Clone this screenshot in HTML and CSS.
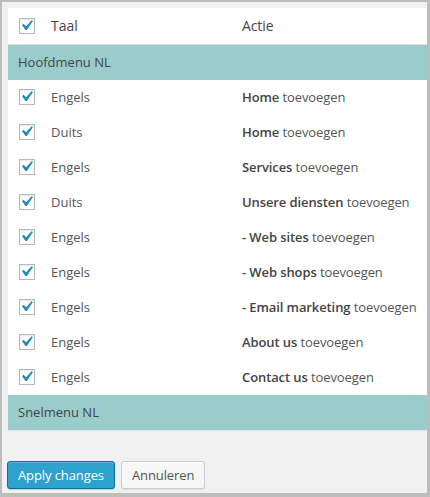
FILE: index.html
```html
<!DOCTYPE html>
<html lang="nl">
<head>
<meta charset="utf-8">
<link rel="stylesheet" href="styles.css">
</head>
<body>
<div class="frame">
  <div class="table">
    <div class="row head">
      <span class="cb"><svg viewBox="0 0 20 20"><path d="M14.83 4.89l1.34.94-5.81 8.38H9.02L5.78 9.67l1.34-1.25 2.57 2.4z"/></svg></span>
      <span class="lang">Taal</span>
      <span class="action">Actie</span>
    </div>
    <div class="band">Hoofdmenu NL</div>
    <div class="row">
      <span class="cb"><svg viewBox="0 0 20 20"><path d="M14.83 4.89l1.34.94-5.81 8.38H9.02L5.78 9.67l1.34-1.25 2.57 2.4z"/></svg></span>
      <span class="lang">Engels</span>
      <span class="action"><b>Home</b> toevoegen</span>
    </div>
    <div class="row">
      <span class="cb"><svg viewBox="0 0 20 20"><path d="M14.83 4.89l1.34.94-5.81 8.38H9.02L5.78 9.67l1.34-1.25 2.57 2.4z"/></svg></span>
      <span class="lang">Duits</span>
      <span class="action"><b>Home</b> toevoegen</span>
    </div>
    <div class="row">
      <span class="cb"><svg viewBox="0 0 20 20"><path d="M14.83 4.89l1.34.94-5.81 8.38H9.02L5.78 9.67l1.34-1.25 2.57 2.4z"/></svg></span>
      <span class="lang">Engels</span>
      <span class="action"><b>Services</b> toevoegen</span>
    </div>
    <div class="row">
      <span class="cb"><svg viewBox="0 0 20 20"><path d="M14.83 4.89l1.34.94-5.81 8.38H9.02L5.78 9.67l1.34-1.25 2.57 2.4z"/></svg></span>
      <span class="lang">Duits</span>
      <span class="action"><b>Unsere diensten</b> toevoegen</span>
    </div>
    <div class="row">
      <span class="cb"><svg viewBox="0 0 20 20"><path d="M14.83 4.89l1.34.94-5.81 8.38H9.02L5.78 9.67l1.34-1.25 2.57 2.4z"/></svg></span>
      <span class="lang">Engels</span>
      <span class="action"><b>- Web sites</b> toevoegen</span>
    </div>
    <div class="row">
      <span class="cb"><svg viewBox="0 0 20 20"><path d="M14.83 4.89l1.34.94-5.81 8.38H9.02L5.78 9.67l1.34-1.25 2.57 2.4z"/></svg></span>
      <span class="lang">Engels</span>
      <span class="action"><b>- Web shops</b> toevoegen</span>
    </div>
    <div class="row">
      <span class="cb"><svg viewBox="0 0 20 20"><path d="M14.83 4.89l1.34.94-5.81 8.38H9.02L5.78 9.67l1.34-1.25 2.57 2.4z"/></svg></span>
      <span class="lang">Engels</span>
      <span class="action"><b>- Email marketing</b> toevoegen</span>
    </div>
    <div class="row">
      <span class="cb"><svg viewBox="0 0 20 20"><path d="M14.83 4.89l1.34.94-5.81 8.38H9.02L5.78 9.67l1.34-1.25 2.57 2.4z"/></svg></span>
      <span class="lang">Engels</span>
      <span class="action"><b>About us</b> toevoegen</span>
    </div>
    <div class="row">
      <span class="cb"><svg viewBox="0 0 20 20"><path d="M14.83 4.89l1.34.94-5.81 8.38H9.02L5.78 9.67l1.34-1.25 2.57 2.4z"/></svg></span>
      <span class="lang">Engels</span>
      <span class="action"><b>Contact us</b> toevoegen</span>
    </div>
    <div class="band">Snelmenu NL</div>
  </div>
  <div class="footer">
    <button class="btn primary">Apply changes</button>
    <button class="btn secondary">Annuleren</button>
  </div>
</div>
</body>
</html>
```
FILE: styles.css
```css
html, body {
  margin: 0;
  padding: 0;
}
body {
  width: 430px;
  height: 497px;
  overflow: hidden;
  font-family: "Open Sans", "Liberation Sans", sans-serif;
  color: #555;
}
.frame {
  box-sizing: border-box;
  width: 430px;
  height: 497px;
  background: #f1f1f1;
  border-style: solid;
  border-color: #bdbdbd;
  border-width: 2px 3px 4px 2px;
  padding: 6px 0 0 6px;
}
.table {
  background: #fff;
  box-shadow: 0 1px 1px rgba(0, 0, 0, 0.06);
}
.row {
  display: grid;
  grid-template-columns: 32px 191px 1fr;
  align-items: center;
  height: 35px;
  padding-left: 11px;
  font-size: 13px;
  line-height: 17px;
  padding-bottom: 1px;
  box-sizing: border-box;
  color: #555;
  white-space: nowrap;
}
.row.head {
  height: 37px;
  font-size: 14px;
  color: #444;
  border-bottom: 1px solid #e1e1e1;
}
.action {
  letter-spacing: -0.1px;
}
.row b {
  font-weight: 600;
  color: #444;
}
.cb {
  position: relative;
  box-sizing: border-box;
  width: 16px;
  height: 16px;
  border: 1px solid #b4b9be;
  background: #fff;
  box-shadow: inset 0 1px 2px rgba(0, 0, 0, 0.1);
}
.cb svg {
  position: absolute;
  top: -4px;
  left: -4px;
  width: 21px;
  height: 21px;
  fill: #1e8cbe;
}
.band {
  height: 35px;
  line-height: 35px;
  padding-left: 10px;
  background: #9acccc;
  font-size: 13px;
  color: #444;
}
.footer {
  display: flex;
  gap: 6px;
  padding: 31px 0 0 0;
  margin-left: -1px;
}
.btn {
  box-sizing: border-box;
  height: 28px;
  padding: 0 10px 1px;
  font-family: "Open Sans", "Liberation Sans", sans-serif;
  font-size: 13px;
  line-height: 26px;
  letter-spacing: -0.1px;
  border-radius: 3px;
  border: 1px solid;
  white-space: nowrap;
  cursor: pointer;
}
.primary {
  background: #2ea2cc;
  border-color: #0074a2;
  color: #fff;
  box-shadow: inset 0 1px 0 rgba(120, 200, 230, 0.5), 0 1px 0 rgba(0, 0, 0, 0.15);
}
.secondary {
  background: #f7f7f7;
  border-color: #cccccc;
  color: #555;
  box-shadow: inset 0 1px 0 #fff, 0 1px 0 rgba(0, 0, 0, 0.08);
}
```
